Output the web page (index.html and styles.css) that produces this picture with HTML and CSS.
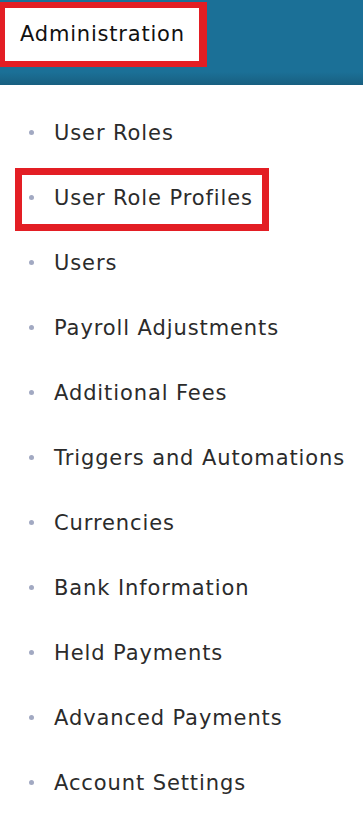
FILE: index.html
```html
<!DOCTYPE html>
<html lang="en">
<head>
    <meta charset="UTF-8">
    <meta name="viewport" content="width=device-width, initial-scale=1.0">
    <title>Administration</title>
    <link rel="stylesheet" href="styles.css">
</head>
<body>
    <div class="top-bar">
        <div class="section-title">Administration</div>
    </div>

    <ul class="admin-menu">
        <li><span class="item">User Roles</span></li>
        <li><span class="item marked">User Role Profiles</span></li>
        <li><span class="item">Users</span></li>
        <li><span class="item">Payroll Adjustments</span></li>
        <li><span class="item">Additional Fees</span></li>
        <li><span class="item">Triggers and Automations</span></li>
        <li><span class="item">Currencies</span></li>
        <li><span class="item">Bank Information</span></li>
        <li><span class="item">Held Payments</span></li>
        <li><span class="item">Advanced Payments</span></li>
        <li><span class="item">Account Settings</span></li>
    </ul>
</body>
</html>
```

FILE: styles.css
```css
body {
    margin: 0;
    font-family: "DejaVu Sans", "Noto Sans", sans-serif;
    background-color: #fff;
    color: #2b2b2b;
}
.top-bar {
    height: 85px;
    padding-top: 2px;
    box-sizing: border-box;
    background: linear-gradient(to bottom, #1b7097 0, #1b7097 72px, #185f80 85px);
}
.section-title {
    display: inline-block;
    box-sizing: border-box;
    width: 207px;
    height: 65px;
    padding: 0 0 0 15px;
    border-style: solid;
    border-color: #e31e24;
    border-width: 6px 8px 6px 5px;
    background-color: #fff;
    font-size: 21px;
    letter-spacing: 0.8px;
    line-height: 53px;
    color: #111;
}
.admin-menu {
    list-style: none;
    margin: 0;
    padding: 15px 0 0 0;
}
.admin-menu li {
    height: 65px;
    display: flex;
    align-items: center;
}
.item {
    position: relative;
    margin-left: 54px;
    font-size: 21px;
    letter-spacing: 0.9px;
    line-height: 30px;
    color: #2b2b2b;
}
.item::before {
    content: "";
    position: absolute;
    left: -25px;
    top: 50%;
    width: 5px;
    height: 5px;
    margin-top: -3px;
    border-radius: 50%;
    background-color: #a2a9c2;
}
.item.marked::after {
    content: "";
    position: absolute;
    top: -15px;
    bottom: -18px;
    left: -39px;
    right: -16px;
    border: 7px solid #e31e24;
}
```
